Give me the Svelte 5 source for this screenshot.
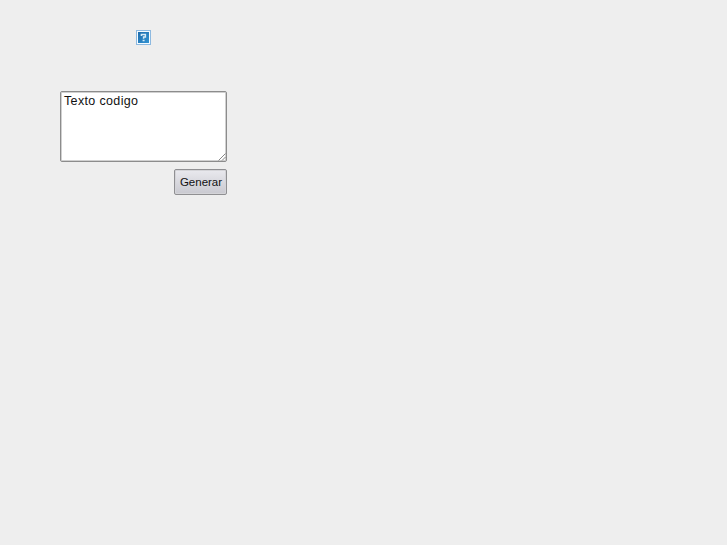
<script lang="ts">
    let codigo = $state("Texto codigo");
</script>

<main>
    <svg class="logo" width="15" height="15" viewBox="0 0 15 15">
        <defs>
            <linearGradient id="blue" x1="0" y1="0" x2="1" y2="1">
                <stop offset="0" stop-color="#1d6cad" />
                <stop offset="1" stop-color="#3293d2" />
            </linearGradient>
        </defs>
        <rect x="0.5" y="0.5" width="14" height="14" fill="#f5fbff" stroke="#8db9e0" />
        <rect x="2" y="2" width="11" height="11" fill="url(#blue)" />
        <path
            d="M5.4 6 V4.6 H9.4 V6.9 H7.6 V8.7 M6.6 10.4 H8.6"
            fill="none"
            stroke="#d5eaf6"
            stroke-width="1.5"
        />
    </svg>

    <form onsubmit={(e) => e.preventDefault()}>
        <div class="field">
            <textarea bind:value={codigo} spellcheck="false"></textarea>
            <svg class="grip" width="8" height="8" viewBox="0 0 8 8">
                <path d="M0.5 7.5 L7.5 0.5 M4 7.5 L7.5 4" fill="none" stroke="#888" />
            </svg>
        </div>
        <button type="submit">Generar</button>
    </form>
</main>

<style>
    :global(body) {
        background: #eee;
    }

    main {
        display: flex;
        flex-direction: column;
        align-items: center;
        gap: 46px;
        width: 167px;
        padding: 30px 0 0 60px;
        font-family: "Liberation Sans", Arial, sans-serif;
    }

    .logo {
        display: block;
    }

    form {
        display: flex;
        flex-direction: column;
        align-items: flex-end;
        gap: 7px;
        width: 100%;
    }

    .field {
        position: relative;
        width: 100%;
        height: 71px;
    }

    textarea {
        display: block;
        box-sizing: border-box;
        width: 100%;
        height: 100%;
        padding: 2px 3px;
        border: 1px solid #8c8c8c;
        border-radius: 2px;
        box-shadow: inset 0 0 0 1px #d0d0d0;
        outline: none;
        resize: none;
        background: #fff;
        color: #111;
        font: 12.5px/14px "Liberation Sans", Arial, sans-serif;
        letter-spacing: 0.35px;
    }

    /* resize handle, drawn over the corner */
    .grip {
        position: absolute;
        right: 1px;
        bottom: 1px;
        pointer-events: none;
    }

    button {
        box-sizing: border-box;
        width: 53px;
        height: 26px;
        padding: 0 0 0 1px;
        border: 1px solid #8f8f92;
        border-radius: 2px;
        box-shadow: inset 0 0 0 1px #d4d4d8;
        background: linear-gradient(#e9e9ee, #c9c9d0);
        color: #111;
        font: 11.5px/14px "Liberation Sans", Arial, sans-serif;
    }
</style>
